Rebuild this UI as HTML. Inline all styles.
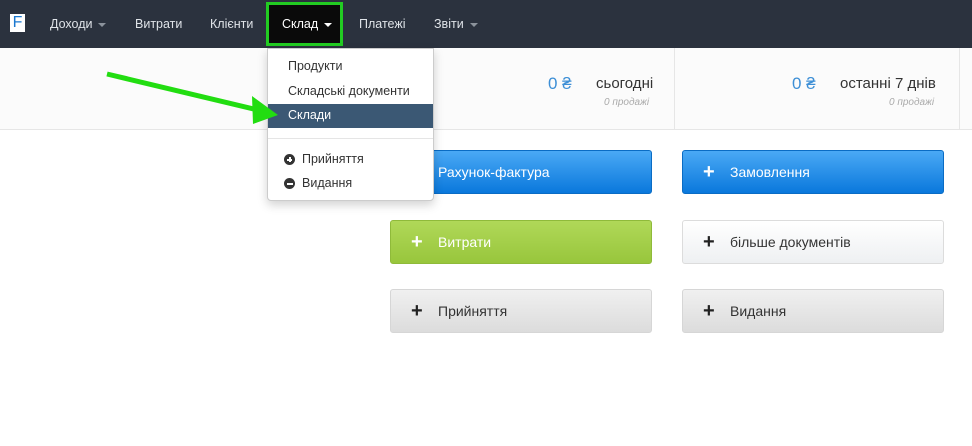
<!DOCTYPE html>
<html><head><meta charset="utf-8"><style>
body{margin:0;width:972px;height:446px;overflow:hidden;background:#fff;font-family:"Liberation Sans",sans-serif;font-size:13px;position:relative}
.nav{position:absolute;left:0;top:0;width:972px;height:48px;background:#2b323e}
.nav span{position:absolute;top:17px;color:#dfe3e8;font-size:12.5px}
.car{display:inline-block;width:0;height:0;border-left:4px solid transparent;border-right:4px solid transparent;border-top:4px solid #8c939c;vertical-align:middle;margin-left:6px}
.stats{position:absolute;top:48px;left:0;width:972px;height:81px;background:#fbfbfb;border-bottom:1px solid #e6e6e6}
.btn{position:absolute;width:262px;height:44px;border-radius:3px;font-size:14px;line-height:43px;box-sizing:border-box}
.btn b{position:absolute;left:20px;font-size:20px;font-weight:900}
.btn i{font-style:normal;position:absolute;left:47px}
.blue{background:linear-gradient(#4aa9f5,#0a78dc);color:#fff;border:1px solid #0a6cc4}
.green{background:linear-gradient(#b0d858,#98c63c);color:#fff;border:1px solid #8fba3a}
.white{background:linear-gradient(#fff,#eef0f2);color:#333;border:1px solid #dcdcdc}
.gray{background:linear-gradient(#f0f0f0,#dcdcdc);color:#333;border:1px solid #d6d6d6}
.white b,.gray b{color:#222}
.dd{position:absolute;left:267px;top:48px;width:167px;height:153px;background:#fff;border:1px solid #ccc;border-radius:0 0 4px 4px;box-shadow:0 4px 10px rgba(0,0,0,.18);box-sizing:border-box}
.dd div{position:absolute;left:0;width:100%;color:#333;font-size:12.5px}
.ic{position:absolute;left:16px;top:2px;width:11px;height:11px;border-radius:50%;background:#333}
</style></head><body>
<div class="nav">
<div style="position:absolute;left:10px;top:14px;width:15px;height:18px;background:#fff;color:#1a78d0;font-size:16px;line-height:18px;text-align:center">F</div>
<span style="left:50px">Доходи<i class="car"></i></span>
<span style="left:135px">Витрати</span>
<span style="left:210px">Клієнти</span>
<div style="position:absolute;left:266px;top:2px;width:77px;height:44px;background:#0a0a0a;border:3px solid #22cc22;box-sizing:border-box"></div>
<span style="left:282px;color:#fff">Склад<i class="car" style="border-top-color:#fff"></i></span>
<span style="left:359px">Платежі</span>
<span style="left:434px">Звіти<i class="car"></i></span>
</div>
<div class="stats">
<div style="position:absolute;left:674px;top:0;width:1px;height:81px;background:#e6e6e6"></div>
<div style="position:absolute;left:959px;top:0;width:1px;height:81px;background:#e6e6e6"></div>
<div style="position:absolute;left:548px;top:26px;color:#3d8fd6;font-size:17px">0 ₴</div>
<div style="position:absolute;left:596px;top:27px;color:#333;font-size:15px">сьогодні</div>
<div style="position:absolute;left:604px;top:49px;color:#aaa;font-size:10px;font-style:italic">0 продажі</div>
<div style="position:absolute;left:792px;top:26px;color:#3d8fd6;font-size:17px">0 ₴</div>
<div style="position:absolute;left:840px;top:27px;color:#333;font-size:15px">останні 7 днів</div>
<div style="position:absolute;left:889px;top:49px;color:#aaa;font-size:10px;font-style:italic">0 продажі</div>
</div>
<div class="btn blue" style="left:390px;top:150px"><b>+</b><i>Рахунок-фактура</i></div>
<div class="btn blue" style="left:682px;top:150px"><b>+</b><i>Замовлення</i></div>
<div class="btn green" style="left:390px;top:220px"><b>+</b><i>Витрати</i></div>
<div class="btn white" style="left:682px;top:220px"><b>+</b><i>більше документів</i></div>
<div class="btn gray" style="left:390px;top:289px"><b>+</b><i>Прийняття</i></div>
<div class="btn gray" style="left:682px;top:289px"><b>+</b><i>Видання</i></div>
<div class="dd">
<div style="top:10px;left:20px">Продукти</div>
<div style="top:35px;left:20px">Складські документи</div>
<div style="top:55px;height:24px;background:#3b5874"></div>
<div style="top:59px;left:20px;color:#fff">Склади</div>
<div style="top:89px;height:1px;background:#e5e5e5"></div>
<div style="top:103px;height:16px"><span class="ic"></span><span style="position:absolute;left:19px;top:6.5px;width:5px;height:2px;background:#fff"></span><span style="position:absolute;left:20.5px;top:5px;width:2px;height:5px;background:#fff"></span><span style="position:absolute;left:34px;top:0">Прийняття</span></div>
<div style="top:127px;height:16px"><span class="ic"></span><span style="position:absolute;left:18.5px;top:6.5px;width:6px;height:2px;background:#fff"></span><span style="position:absolute;left:34px;top:0">Видання</span></div>
</div>
<svg style="position:absolute;left:0;top:0" width="972" height="446">
<line x1="107" y1="74" x2="258" y2="110" stroke="#22dd11" stroke-width="5"/>
<polygon points="278,115 252,96 253,124" fill="#22dd11"/>
</svg>
</body></html>
